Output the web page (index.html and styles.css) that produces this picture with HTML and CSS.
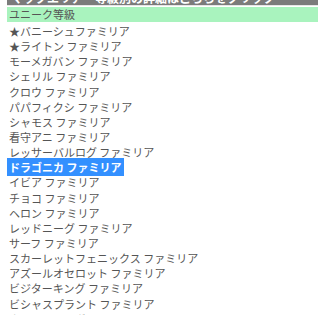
FILE: index.html
```html
<!DOCTYPE html>
<html lang="ja">
<head>
<meta charset="utf-8">
<link rel="stylesheet" href="styles.css">
</head>
<body>
<div class="page">
  <div class="title"><span class="title-text">マップエリア・等級別の詳細はこちらをクリック</span></div>
  <div class="grade">ユニーク等級</div>
  <ul class="list">
    <li>★バニーシュファミリア</li>
    <li>★ライトン ファミリア</li>
    <li>モーメガバン ファミリア</li>
    <li>シェリル ファミリア</li>
    <li>クロウ ファミリア</li>
    <li>パパフィクシ ファミリア</li>
    <li>シャモス ファミリア</li>
    <li>看守アニ ファミリア</li>
    <li>レッサーバルログ ファミリア</li>
    <li><span class="selected">ドラゴニカ ファミリア</span></li>
    <li>イビア ファミリア</li>
    <li>チョコ ファミリア</li>
    <li>ヘロン ファミリア</li>
    <li>レッドニーグ ファミリア</li>
    <li>サーフ ファミリア</li>
    <li>スカーレットフェニックス ファミリア</li>
    <li>アズールオセロット ファミリア</li>
    <li>ビジターキング ファミリア</li>
    <li>ビシャスプラント ファミリア</li>
    <li>ホーンテッドボーン ファミリア</li>
  </ul>
</div>
</body>
</html>
```

FILE: styles.css
```css
html, body {
  margin: 0;
  padding: 0;
  background: #ffffff;
}
body {
  font-family: "Noto Sans CJK JP", "Noto Sans", sans-serif;
  font-size: 11px;
  color: #555555;
  overflow: hidden;
  height: 315px;
}
.page {
  padding-left: 7px;
  padding-right: 2px;
}
.title {
  height: 5px;
  overflow: hidden;
  background: #7b7b7b;
  border-bottom: 1px solid #e6e6e6;
}
.title-text {
  display: block;
  color: #ffffff;
  font-weight: bold;
  font-size: 12px;
  line-height: 12px;
  padding-left: 4px;
  white-space: nowrap;
  margin-top: -8px;
}
.grade {
  margin-top: 1px;
  height: 15px;
  line-height: 15px;
  background: #a9f3be;
  padding-left: 2px;
  color: #555555;
}
.list {
  list-style: none;
  margin: 0;
  padding: 2px 0 0 2px;
}
.list li {
  height: 15.15px;
  line-height: 15.15px;
  white-space: nowrap;
}
.selected {
  background: #3390ff;
  color: #ffffff;
  font-weight: bold;
  margin-left: -2px;
  padding: 1px 2px 1px 2px;
}
```
